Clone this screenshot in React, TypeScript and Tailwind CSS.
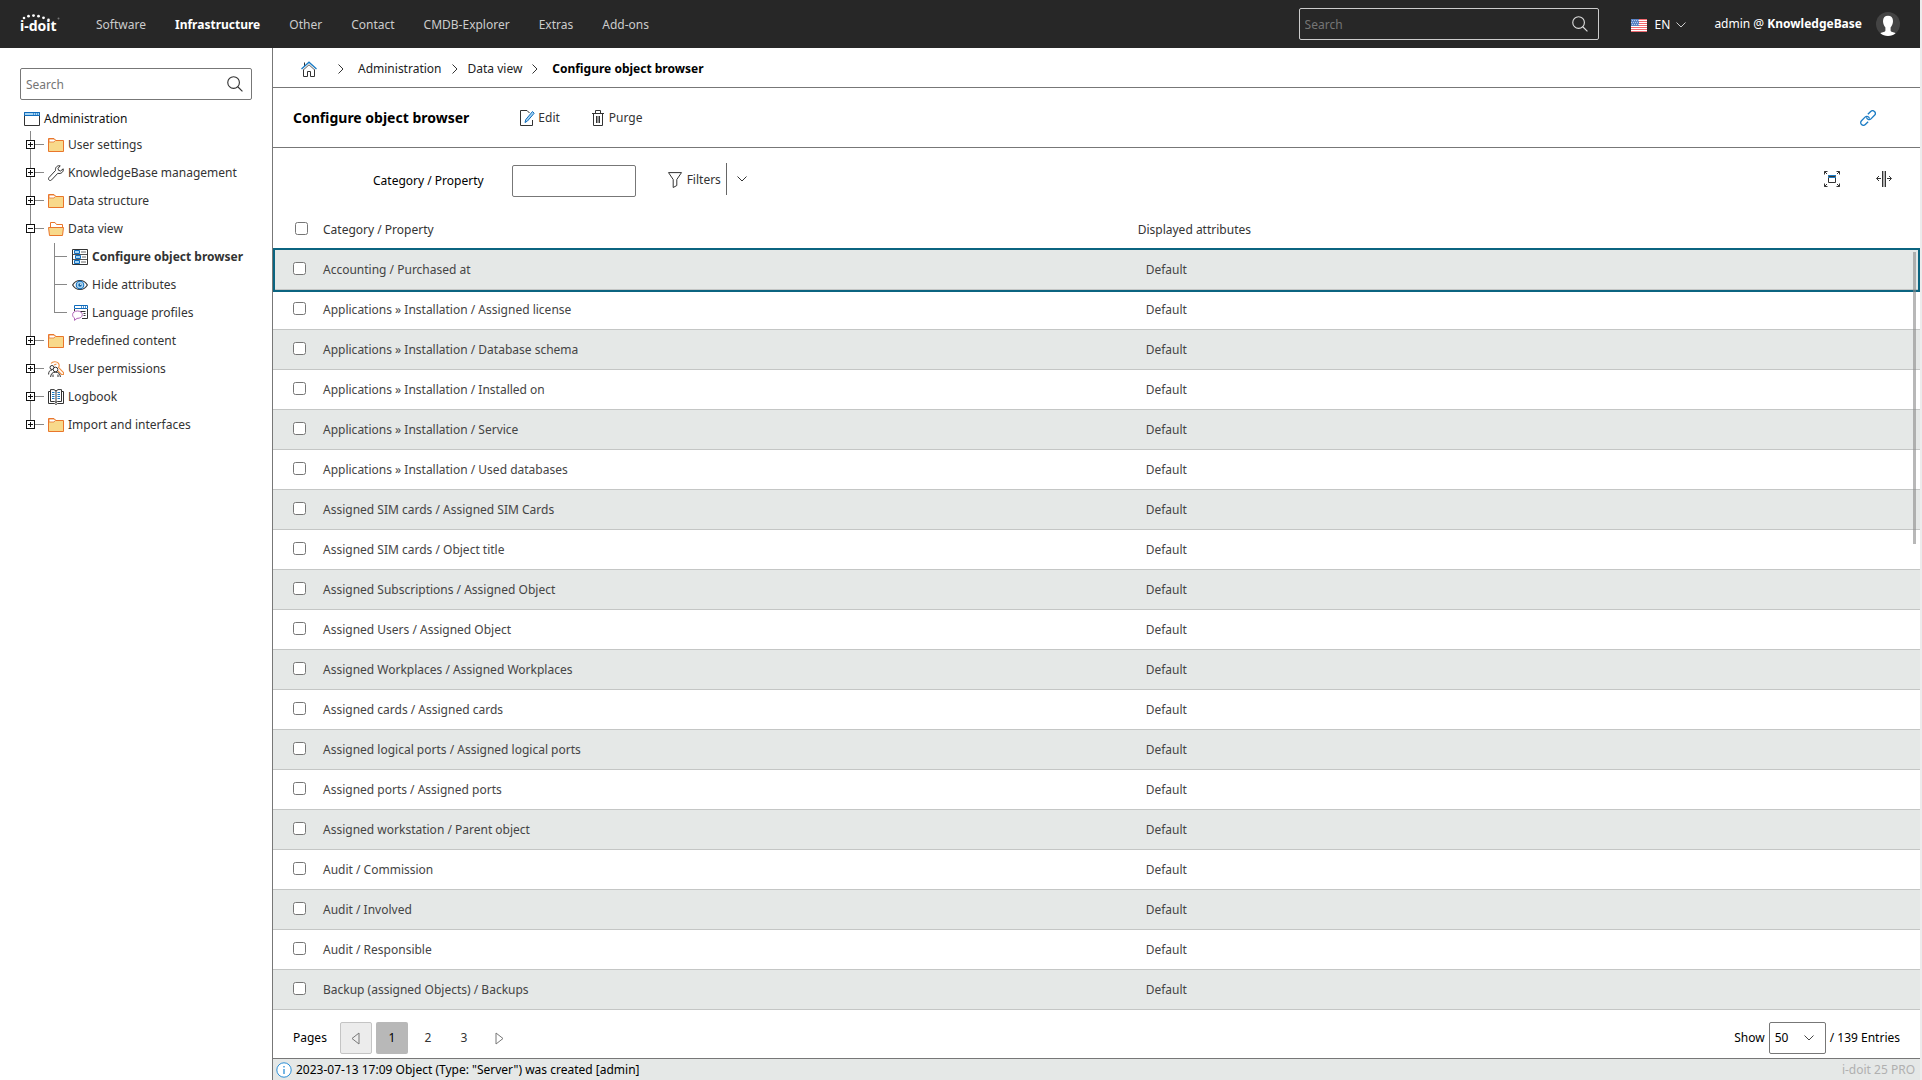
import React from "react";

const rows = [
  "Accounting / Purchased at",
  "Applications » Installation / Assigned license",
  "Applications » Installation / Database schema",
  "Applications » Installation / Installed on",
  "Applications » Installation / Service",
  "Applications » Installation / Used databases",
  "Assigned SIM cards / Assigned SIM Cards",
  "Assigned SIM cards / Object title",
  "Assigned Subscriptions / Assigned Object",
  "Assigned Users / Assigned Object",
  "Assigned Workplaces / Assigned Workplaces",
  "Assigned cards / Assigned cards",
  "Assigned logical ports / Assigned logical ports",
  "Assigned ports / Assigned ports",
  "Assigned workstation / Parent object",
  "Audit / Commission",
  "Audit / Involved",
  "Audit / Responsible",
  "Backup (assigned Objects) / Backups",
];

const navItems = ["Software", "Infrastructure", "Other", "Contact", "CMDB-Explorer", "Extras", "Add-ons"];

type IconProps = { children: React.ReactNode; className?: string };

function Icon({ children, className = "" }: IconProps) {
  return (
    <svg width="16" height="16" viewBox="0 0 16 16" fill="none" stroke="#333" className={`shrink-0 ${className}`} aria-hidden="true">
      {children}
    </svg>
  );
}

function SearchIcon({ className }: { className: string }) {
  return (
    <svg width="16" height="16" viewBox="0 0 17 17" fill="none" stroke="currentColor" strokeWidth="1.2" className={className} aria-hidden="true">
      <circle cx="7" cy="7" r="6.2" />
      <path d="M11.4 11.4L16.4 16.4" />
    </svg>
  );
}

function Chevron({ className = "" }: { className?: string }) {
  return (
    <svg width="10" height="6" viewBox="0 0 10 6" fill="none" stroke="currentColor" className={className} aria-hidden="true">
      <path d="M.5 .5L5 5L9.500 .5" />
    </svg>
  );
}

function CrumbArrow() {
  return (
    <svg width="6" height="10" viewBox="0 0 6 10" fill="none" stroke="#333" className="shrink-0" aria-hidden="true">
      <path d="M.5 .5L5 5L.5 9.500" />
    </svg>
  );
}

const FolderIcon = () => (
  <Icon>
    <path d="M.5 5V1.500H6L8 3.500H15.500V14.500H.5V5Z" fill="#f8d98b" stroke="#e9762b" />
    <path d="M1 2H5.800L7.300 3.500L6 5H1Z" fill="#fff" stroke="#e9762b" strokeWidth=".8" />
  </Icon>
);

const FolderOpenIcon = () => (
  <Icon>
    <path d="M2.500 7V1.500H7L8.500 3.500H14.500V7" fill="#fff" stroke="#e9762b" />
    <path d="M.5 6.500H15.500L14.500 14.500H1.500Z" fill="#f8d98b" stroke="#e9762b" />
  </Icon>
);

const WrenchIcon = () => (
  <Icon>
    <path d="M15.200 3.800L12.600 6L10.600 5.400L10 3.400L12.200 .8C9.500 .2 7 2.200 7.500 5.500L.9 12.600C.2 13.600 .5 14.700 1.200 15.200C2 15.800 2.900 15.600 3.600 14.900L9.800 8.300C13 9.200 15.800 7 15.200 3.800Z" />
  </Icon>
);

const ConfigIcon = () => (
  <Icon>
    <path d="M.5 .5H15.500V15.500H.5Z" fill="#fff" />
    <path d="M1 5.500H15M1 10.500H15" stroke="#555" />
    <path d="M2.500 1.500H7.500V4.500H2.500ZM3.500 6.500H8.500V9.500H3.500ZM2.500 11.500H7.500V14.500H2.500Z" fill="#a6d4f2" stroke="#0f6cbd" />
    <path d="M9 3H14M10 8H14M9 13H14" stroke="#b4b4b4" strokeWidth="2" />
  </Icon>
);

const EyeIcon = () => (
  <Icon>
    <path d="M.6 8C4 2 12 2 15.400 8C12 14 4 14 .6 8Z" fill="#fff" strokeWidth="1.100" />
    <circle cx="8" cy="8" r="3.800" fill="#a6d4f2" stroke="#0f6cbd" strokeWidth="1.100" />
    <circle cx="8" cy="8" r="1.700" fill="#175e9c" stroke="none" />
    <circle cx="8.700" cy="7.300" r=".7" fill="#fff" stroke="none" />
  </Icon>
);

const LanguageIcon = () => (
  <Icon>
    <path d="M2.500 3V.5H15.500V3.500H2.500Z" fill="#fff" stroke="#0f6cbd" />
    <path d="M9.500 1V3M11.500 1V3M13.500 1V3" stroke="#0f6cbd" strokeWidth=".7" />
    <path d="M15.500 4V13.500H10M2.500 4V6M8 6.500H13.500M11.500 8.500H13.500M11.500 10.500H13.500" />
    <path d="M5.500 6C2.500 6 .6 7.500 .6 9.700C.6 11.200 1.300 12.300 2.500 13V15.400L5 13.400C8.200 13.400 10.300 12 10.300 9.700C10.300 7.500 8.200 6 5.500 6Z" fill="#fff" stroke="#b065b8" />
  </Icon>
);

const PermissionIcon = () => (
  <Icon>
    <path d="M3 2.500C4.500 .5 8.500 0 10.300 2.200C11.500 3.800 11.200 5.500 10.500 6.500L15.500 11.500V13.500H13.500L9.500 9.500M6 4L8.500 3" stroke="#ef8f43" strokeWidth="1.100" />
    <circle cx="4" cy="6.500" r="2" />
    <path d="M.6 13.500C.6 10.800 1.500 9 4 9" />
    <circle cx="7.500" cy="8.500" r="2.300" fill="#fff" />
    <path d="M2.600 16C3 13 4 11.200 7.500 11.200C11 11.200 12 13 12.400 16M5 13.500V16M10 13.500V16" />
  </Icon>
);

const BookIcon = () => (
  <Icon>
    <path d="M2.500 2.500H.5V14.500H6.500L8 15.500L9.500 14.500H15.500V2.500H13.500" />
    <path d="M8 2L6 .6H2.500V12.500H6.500L8 13.500L9.500 12.500H13.500V.6H10ZM8 2V13.500" fill="#fff" />
    <path d="M4 3.500H6.500M4 5.500H6.500M4 7.500H6.500M4 9.500H6.500M9.500 3.500H12M9.500 5.500H12M9.500 7.500H12M9.500 9.500H12" stroke="#1a7bc4" />
  </Icon>
);

const WindowIcon = () => (
  <Icon>
    <path d="M.5 1.500H15.500V14.500H.5Z" fill="#fff" />
    <path d="M.5 1.500H15.500V4.500H.5Z" fill="#a6d4f2" stroke="#0f6cbd" />
    <path d="M9.500 2V4M11.500 2V4M13.500 2V4" stroke="#0f6cbd" strokeWidth=".6" />
  </Icon>
);

/* Square expander with the dash that leads to the entry's icon. */
function Expander({ open }: { open?: boolean }) {
  return (
    <button type="button" aria-label={open ? "Collapse" : "Expand"} className="mr-1 mb-px flex items-center">
      <svg width="18" height="9" viewBox="0 0 18 9" fill="#fff" stroke="#111" aria-hidden="true">
        <path d="M9 4.500H18" stroke="#888" />
        <rect x=".5" y=".5" width="8" height="8" />
        <path d={open ? "M2 4.500H7" : "M2 4.500H7M4.500 2V7"} />
      </svg>
    </button>
  );
}

type Node = { label: string; icon: React.ReactNode; open?: boolean; children?: Node[]; active?: boolean };

const tree: Node[] = [
  { label: "User settings", icon: <FolderIcon /> },
  { label: "KnowledgeBase management", icon: <WrenchIcon /> },
  { label: "Data structure", icon: <FolderIcon /> },
  {
    label: "Data view",
    icon: <FolderOpenIcon />,
    open: true,
    children: [
      { label: "Configure object browser", icon: <ConfigIcon />, active: true },
      { label: "Hide attributes", icon: <EyeIcon /> },
      { label: "Language profiles", icon: <LanguageIcon /> },
    ],
  },
  { label: "Predefined content", icon: <FolderIcon /> },
  { label: "User permissions", icon: <PermissionIcon /> },
  { label: "Logbook", icon: <BookIcon /> },
  { label: "Import and interfaces", icon: <FolderIcon /> },
];

function Tree() {
  return (
    <ul className="relative text-[#333]">
      <li aria-hidden="true" className="absolute top-0 bottom-4 left-[10px] w-px bg-[#888]" />
      {tree.map((n) => (
        <li key={n.label} className="relative pl-1.5">
          <div className="flex h-7 items-center">
            <Expander open={n.open} />
            <a href="#" className="flex items-center gap-1 whitespace-nowrap">
              {n.icon}
              {n.label}
            </a>
          </div>
          {n.children && (
            <ul className="pl-7">
              {n.children.map((c, i) => (
                <li key={c.label} className="flex h-7 items-center">
                  <span aria-hidden="true" className="mr-[5px] flex h-full w-[13px] flex-col">
                    <span className="h-1/2 border-b border-l border-[#888]" />
                    <span className={i === 2 ? "h-1/2" : "h-1/2 border-l border-[#888]"} />
                  </span>
                  <a href="#" className={c.active ? "flex items-center gap-1 font-bold whitespace-nowrap" : "flex items-center gap-1 whitespace-nowrap"}>
                    {c.icon}
                    {c.label}
                  </a>
                </li>
              ))}
            </ul>
          )}
        </li>
      ))}
    </ul>
  );
}

function Logo() {
  const dots = [[4, 4, 1.300], [8.500, 2.200, 1.400], [13.500, 1.600, 1.400], [18.500, 2.200, 1.400], [23.500, 3.800, 1.400], [28.500, 5.800, 1.300], [38.500, 4.500, 1]];
  return (
    <a href="#" aria-label="i-doit" className="relative flex h-8 w-[49px] shrink-0 items-end pb-0.5 font-['Noto_Sans'] text-sm leading-6 font-bold text-white">
      <svg width="42" height="10" viewBox="0 0 42 10" className="absolute top-1.5 left-0" aria-hidden="true">
        {dots.map(([x, y, r], i) => (
          <circle key={x} cx={x} cy={y} r={r} fill={i === 6 ? "#777" : "#fff"} />
        ))}
      </svg>
      i-doit
    </a>
  );
}

function Flag() {
  return (
    <svg width="16" height="13" viewBox="0 0 16 13" aria-hidden="true">
      <rect width="16" height="13" fill="#fff" />
      <path d="M0 .5H16M0 2.500H16M0 4.500H16M0 6.500H16M0 8.500H16M0 10.500H16M0 12.500H16" stroke="#f06a70" />
      <rect width="8" height="7" fill="#5b83c4" />
      <path d="M1 1.500H8M0 3.500H8M1 5.500H8" stroke="#b7c9e8" strokeDasharray="1 1" />
    </svg>
  );
}

function Header() {
  return (
    <header className="flex h-12 items-center bg-[#272727] px-5 text-[#ccc]">
      <Logo />
      <nav className="ml-[26px] flex items-center gap-[27px] pt-0.5">
        {navItems.map((n) => (
          <a key={n} href="#" className={n === "Infrastructure" ? "px-px font-bold text-white" : "px-px"}>
            {n}
          </a>
        ))}
      </nav>
      <label className="ml-auto flex h-8 w-[300px] items-center rounded-xs border border-[#ccc] pr-2.5 pl-[5px]">
        <input aria-label="Search everything" placeholder="Search" className="min-w-0 flex-1 bg-transparent pt-0.5 outline-none placeholder:text-[#757575]" />
        <SearchIcon className="text-[#ddd]" />
      </label>
      <button type="button" className="ml-8 flex items-center pt-0.5 text-white">
        <Flag />
        <span className="mr-1.5 ml-2">EN</span>
        <Chevron className="text-[#ccc]" />
      </button>
      <a href="#" className="ml-7 flex items-center whitespace-pre text-white">
        admin @ <b>KnowledgeBase</b>
        <svg width="24" height="24" viewBox="0 0 24 24" className="ml-3.5" aria-hidden="true">
          <circle cx="12" cy="12" r="12" fill="#444" />
          <path d="M12 3.800C15 3.800 17 5.600 17 9C17 12 15.800 14 14.600 15.500V18.500C14.600 20 17.600 20 19.600 21.300C17.500 23.300 14.800 24 12 24C9.200 24 6.500 23.300 4.400 21.300C6.400 20 9.400 20 9.400 18.500V15.500C8.200 14 7 12 7 9C7 5.600 9 3.800 12 3.800Z" fill="#fff" />
        </svg>
      </a>
    </header>
  );
}

function Breadcrumb() {
  return (
    <nav aria-label="Breadcrumb" className="flex h-10 items-center border-b border-[#777] pt-0.5 pl-7 text-[#222]">
      <a href="#" aria-label="Home">
        <Icon>
          <path d="M2.500 8.500V15.500H6.500V10.500H9.500V15.500H13.500V8.500" />
          <path d="M3.500 5V1.500" stroke="#333" />
          <path d="M.5 8L8 1.200L15.500 8" stroke="#1a7bc4" strokeWidth="1.300" />
          <path d="M2.500 8.800L8 3.800L13.500 8.800" strokeWidth=".8" />
        </Icon>
      </a>
      <span className="mr-3.5 ml-[21px]"><CrumbArrow /></span>
      <a href="#">Administration</a>
      <span className="mx-2.5"><CrumbArrow /></span>
      <a href="#">Data view</a>
      <span className="mr-3.5 ml-2.5"><CrumbArrow /></span>
      <b className="text-black">Configure object browser</b>
    </nav>
  );
}

function TitleBar() {
  return (
    <div className="flex h-15 items-center border-b border-[#777] pr-11 pl-5 text-[#333]">
      <h1 className="text-sm font-bold text-black">Configure object browser</h1>
      <button type="button" className="ml-[50px] flex items-center gap-[3px]">
        <Icon>
          <path d="M8 .5H1.500V15.500H13.500V10M8 .5L10.500 3" />
          <path d="M13.500 1.500L15.200 3.200L8.500 11L6 12.500L6.800 9.500Z" fill="#a6d4f2" stroke="#0f6cbd" />
        </Icon>
        Edit
      </button>
      <button type="button" className="ml-[30px] flex items-center gap-[3px]">
        <Icon>
          <path d="M2 3.500H14M5.500 3V.5H10.500V3M3.500 4V15.500H12.500V4M6.500 6V13M8 6V13M9.500 6V13" />
        </Icon>
        Purge
      </button>
      <button type="button" aria-label="Copy link" className="ml-auto">
        <Icon>
          <g transform="rotate(-45 8 8)" stroke="#1a7bc4" strokeWidth="1.300">
            <path d="M5.500 10.700H1.500C-2 10.700 -2 5.300 1.500 5.300H6.500C9 5.300 9.800 8 8.500 9.500" />
            <path d="M10.500 5.300H14.500C18 5.300 18 10.700 14.500 10.700H9.500C7 10.700 6.200 8 7.500 6.500" />
          </g>
        </Icon>
      </button>
    </div>
  );
}

function FilterBar() {
  return (
    <div className="flex h-[62px] items-center pr-7 pl-[100px] text-[#333]">
      <label htmlFor="filter" className="mt-1 text-black">Category / Property</label>
      <input id="filter" className="mt-1 ml-7 h-8 w-[124px] rounded-xs border border-[#777] px-1" />
      <button type="button" className="mt-0.5 ml-[31px] flex items-center gap-1">
        <Icon>
          <path d="M1.500 .6H14.500L9.800 7.500V13.500L6.200 15.500V7.500Z" />
        </Icon>
        Filters
      </button>
      <button type="button" aria-label="More filters" className="ml-[5px] flex h-8 items-center border-l border-[#666] pl-2.5">
        <Chevron />
      </button>
      <button type="button" aria-label="Fit table" className="ml-auto">
        <Icon>
          <path d="M4.500 5.500H11.500V11.500H4.500Z" />
          <path d="M4 4.500H12M4 6.500H12" stroke="#1a7bc4" />
          <path d="M.5 3.500V.5H3.500M.5 .5L3 3M12.500 .5H15.500V3.500M15.500 .5L13 3M.5 12.500V15.500H3.500M.5 15.500L3 13M12.500 15.500H15.500V12.500M15.500 15.500L13 13" />
        </Icon>
      </button>
      <button type="button" aria-label="Column width" className="ml-9">
        <Icon>
          <path d="M8 0V16" stroke="#b4b4b4" strokeWidth="2" />
          <path d="M6.500 0V16M9.500 0V16M5 7.500H.8M3 5L.5 7.500L3 10M11 7.500H15.200M13 5L15.500 7.500L13 10" />
        </Icon>
      </button>
    </div>
  );
}

function PropertyTable() {
  return (
    <div className="relative">
      <table className="w-full table-fixed border-separate border-spacing-0 text-left">
        <colgroup>
          <col className="w-[50px]" />
          <col />
          <col className="w-[47.500%]" />
        </colgroup>
        <thead className="text-[#333]">
          <tr className="h-10">
            <th className="p-0 pb-1 pl-[22px]"><input type="checkbox" aria-label="Select all" className="block" /></th>
            <th className="p-0 font-normal">Category / Property</th>
            <th className="p-0 font-normal">Displayed attributes</th>
          </tr>
        </thead>
        <tbody className="text-[#444]">
          {rows.map((r) => (
            <tr key={r} className="h-10 odd:bg-[#e5e8e7]">
              <td className="border-b border-[#c4c6c5] p-0 pb-0.5 pl-5"><input type="checkbox" aria-label={r} className="block" /></td>
              <td className="border-b border-[#c4c6c5] p-0">{r}</td>
              <td className="border-b border-[#c4c6c5] p-0 pl-2">Default</td>
            </tr>
          ))}
        </tbody>
      </table>
      <div aria-hidden="true" className="pointer-events-none absolute inset-x-0 top-[38px] h-11 border-2 border-[#0b6480]" />
      <div aria-hidden="true" className="absolute top-[42px] right-1 h-[292px] w-[3px] bg-[#888]/60" />
    </div>
  );
}

function Pagination() {
  return (
    <div className="flex h-12 items-center px-5 pt-2 text-black">
      <span className="mr-[13px]">Pages</span>
      <div className="flex gap-1">
        <button type="button" aria-label="Previous page" className="flex size-8 items-center justify-center rounded-xs border border-[#c4c4c4] bg-[#ececec]">
          <svg width="9" height="13" viewBox="0 0 9 13" fill="none" stroke="#777" aria-hidden="true"><path d="M8 1V12L1 6.500Z" /></svg>
        </button>
        <button type="button" className="size-8 rounded-xs bg-[#b8b8b8]">1</button>
        <button type="button" className="size-8 text-[#333]">2</button>
        <button type="button" className="size-8 text-[#333]">3</button>
        <button type="button" aria-label="Next page" className="flex size-8 items-center justify-center">
          <svg width="9" height="13" viewBox="0 0 9 13" fill="none" stroke="#777" aria-hidden="true"><path d="M1 1V12L8 6.500Z" /></svg>
        </button>
      </div>
      <label htmlFor="per-page" className="mr-1 ml-auto">Show</label>
      <div className="relative flex items-center">
        <select id="per-page" defaultValue="50" className="h-8 w-[57px] appearance-none rounded-xs border border-[#777] pl-[5px]">
          <option>50</option>
          <option>100</option>
        </select>
        <Chevron className="pointer-events-none absolute right-3 text-[#444]" />
      </div>
      <span className="ml-1">/ 139 Entries</span>
    </div>
  );
}

export default function App() {
  return (
    <div className="flex min-h-screen flex-col border-r-2 border-[#ececec] bg-white font-['Noto_Sans','Open_Sans',sans-serif] text-xs">
      <Header />
      <div className="flex flex-1">
        <aside className="w-[272px] shrink-0 px-5 pt-5">
          <label className="flex h-8 items-center rounded-xs border border-[#777] pr-2 pl-[5px]">
            <input aria-label="Search tree" placeholder="Search" className="min-w-0 flex-1 pt-0.5 outline-none placeholder:text-[#757575]" />
            <SearchIcon className="text-[#333]" />
          </label>
          <a href="#" className="mt-2.5 flex h-[18px] items-center gap-1 pl-1 text-[#111]">
            <WindowIcon />
            Administration
          </a>
          <div className="mt-[3px]"><Tree /></div>
        </aside>
        <main className="flex min-w-0 flex-1 flex-col border-l border-[#777]">
          <Breadcrumb />
          <TitleBar />
          <FilterBar />
          <PropertyTable />
          <Pagination />
          <footer className="mt-auto flex h-[22px] items-center justify-between border-t border-[#777] bg-[#e5e8e7] pr-[5px] pl-[3px] text-black">
            <span className="flex items-center gap-1">
              <Icon>
                <circle cx="8" cy="8" r="7.200" fill="#fff" stroke="#2b8fd6" />
                <path d="M8 7V12M8 4V5.500" stroke="#2b8fd6" strokeWidth="1.300" />
              </Icon>
              2023-07-13 17:09 Object (Type: "Server") was created [admin]
            </span>
            <span className="text-[#b0b0b0]">i-doit 25 PRO</span>
          </footer>
        </main>
      </div>
    </div>
  );
}
